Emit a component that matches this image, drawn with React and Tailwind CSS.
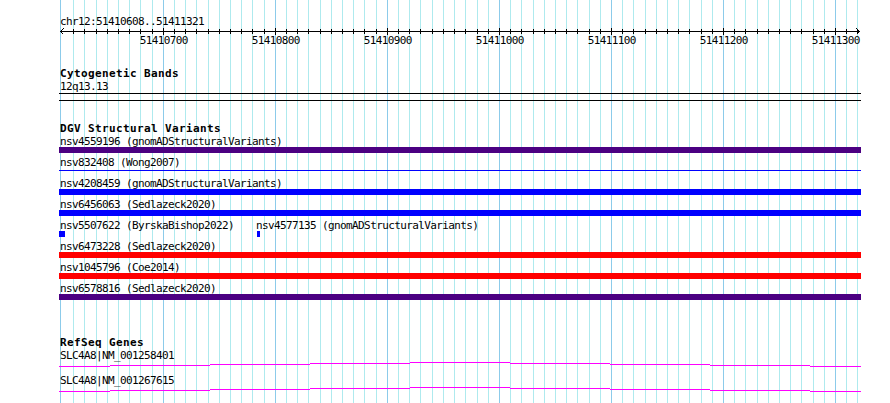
import React from 'react';

// bp -> px mapping of the 10 bp grid
const gridLines = [];
for (let k = -8; k <= 62; k++) {
  gridLines.push({ x: Math.floor(163.3 + 11.204 * k), major: k % 10 === 0 });
}
const majors = gridLines.filter((g) => g.major);
const labelFor = (x) => 51410700 + Math.round((x - 163) / 11.204) * 10;

const intron = [
  [59, 110, 4], [110, 210, 3], [210, 310, 2], [310, 410, 1], [410, 510, 0],
  [510, 610, 1], [610, 710, 2], [710, 810, 3], [810, 861, 4],
];

const variants = [
  { label: 'nsv4559196 (gnomADStructuralVariants)', bar: 'bg-[#4b0082]' },
  { label: 'nsv832408 (Wong2007)', line: true },
  { label: 'nsv4208459 (gnomADStructuralVariants)', bar: 'bg-[#0000ff]' },
  { label: 'nsv6456063 (Sedlazeck2020)', bar: 'bg-[#0000ff]' },
  { split: true },
  { label: 'nsv6473228 (Sedlazeck2020)', bar: 'bg-[#ff0000]' },
  { label: 'nsv1045796 (Coe2014)', bar: 'bg-[#ff0000]' },
  { label: 'nsv6578816 (Sedlazeck2020)', bar: 'bg-[#4b0082]' },
];

const Small = ({ children, className = '' }) => (
  <div className={`h-[13px] leading-[13px] text-[11px] tracking-[-0.62px] whitespace-pre ${className}`}>
    {children}
  </div>
);

const Title = ({ children, className = '' }) => (
  <div className={`h-[13px] leading-[13px] text-[11px] font-bold tracking-[0.38px] pl-[60px] whitespace-pre ${className}`}>
    {children}
  </div>
);

const Grid = () => (
  <svg className="absolute inset-0" width="890" height="403" shapeRendering="crispEdges">
    <rect x="60" y="0" width="1" height="403" fill="#8ccbea" />
    {gridLines.map((g) => (
      <rect key={g.x} x={g.x} y="0" width="1" height="403" fill={g.major ? '#8ccbea' : '#aeeaee'} />
    ))}
  </svg>
);

const Ruler = () => (
  <svg width="890" height="18" className="block" shapeRendering="crispEdges">
    <rect x="60" y="3" width="800" height="1" fill="#000" />
    {gridLines.map((g) => (
      <rect key={g.x} x={g.x} y={g.major ? 0 : 1} width="1" height={g.major ? 7 : 5} fill="#000" />
    ))}
    <polyline points="63.5,0.5 60.5,3.5 63.5,6.5" fill="none" stroke="#000" strokeWidth="1" />
    <polyline points="856.5,0.5 859.5,3.5 856.5,6.5" fill="none" stroke="#000" strokeWidth="1" />
    {majors.map((g) => (
      <text
        key={g.x}
        x={g.x + 0.8}
        y="16"
        textAnchor="middle"
        fontSize="11"
        letterSpacing="-0.62"
        fontFamily="'DejaVu Sans Mono', monospace"
        fill="#000"
      >
        {labelFor(g.x)}
      </text>
    ))}
  </svg>
);

const Intron = () => (
  <svg width="890" height="12" className="block" shapeRendering="crispEdges">
    {intron.map(([a, b, y]) => (
      <rect key={a} x={a} y={y} width={b - a} height="1" fill="#ff00ff" />
    ))}
  </svg>
);

export default function App() {
  return (
    <div className="relative w-[890px] h-[403px] bg-white overflow-hidden text-black font-['DejaVu_Sans_Mono',monospace]">
      <Grid />
      <div className="relative flex flex-col pt-[15px]">
        <Small className="pl-[60px]">chr12:51410608..51411321</Small>
        <Ruler />

        {/* Cytogenetic Bands */}
        <Title className="mt-[21px]">Cytogenetic Bands</Title>
        <Small className="pl-[60px]">12q13.13</Small>
        <div className="ml-[59px] w-[802px] h-[8px] border-y border-black" />

        {/* DGV Structural Variants */}
        <Title className="mt-[21px]">DGV Structural Variants</Title>
        {variants.map((v, i) =>
          v.split ? (
            <div key={i} className="h-[21px]">
              <div className="flex pl-[60px] h-[12px]">
                <Small>nsv5507622 (ByrskaBishop2022)</Small>
                <Small className="ml-[22px]">nsv4577135 (gnomADStructuralVariants)</Small>
              </div>
              <div className="flex h-[6px]">
                <div className="ml-[59px] w-[6px] bg-[#0000ff]" />
                <div className="ml-[192px] w-[3px] bg-[#0000ff]" />
              </div>
            </div>
          ) : (
            <div key={i} className="h-[21px]">
              <div className="h-[12px] pl-[60px]">
                <Small>{v.label}</Small>
              </div>
              {v.line ? (
                <div className="ml-[59px] w-[802px] h-[6px] pt-[2px]">
                  <div className="h-[1px] bg-[#0000ff]" />
                </div>
              ) : (
                <div className={`ml-[59px] w-[802px] h-[6px] ${v.bar}`} />
              )}
            </div>
          )
        )}

        {/* RefSeq Genes */}
        <Title className="mt-[33px]">RefSeq Genes</Title>
        <Small className="pl-[60px]">SLC4A8|NM_001258401</Small>
        <Intron />
        <Small className="pl-[60px]">SLC4A8|NM_001267615</Small>
        <Intron />
      </div>
    </div>
  );
}
